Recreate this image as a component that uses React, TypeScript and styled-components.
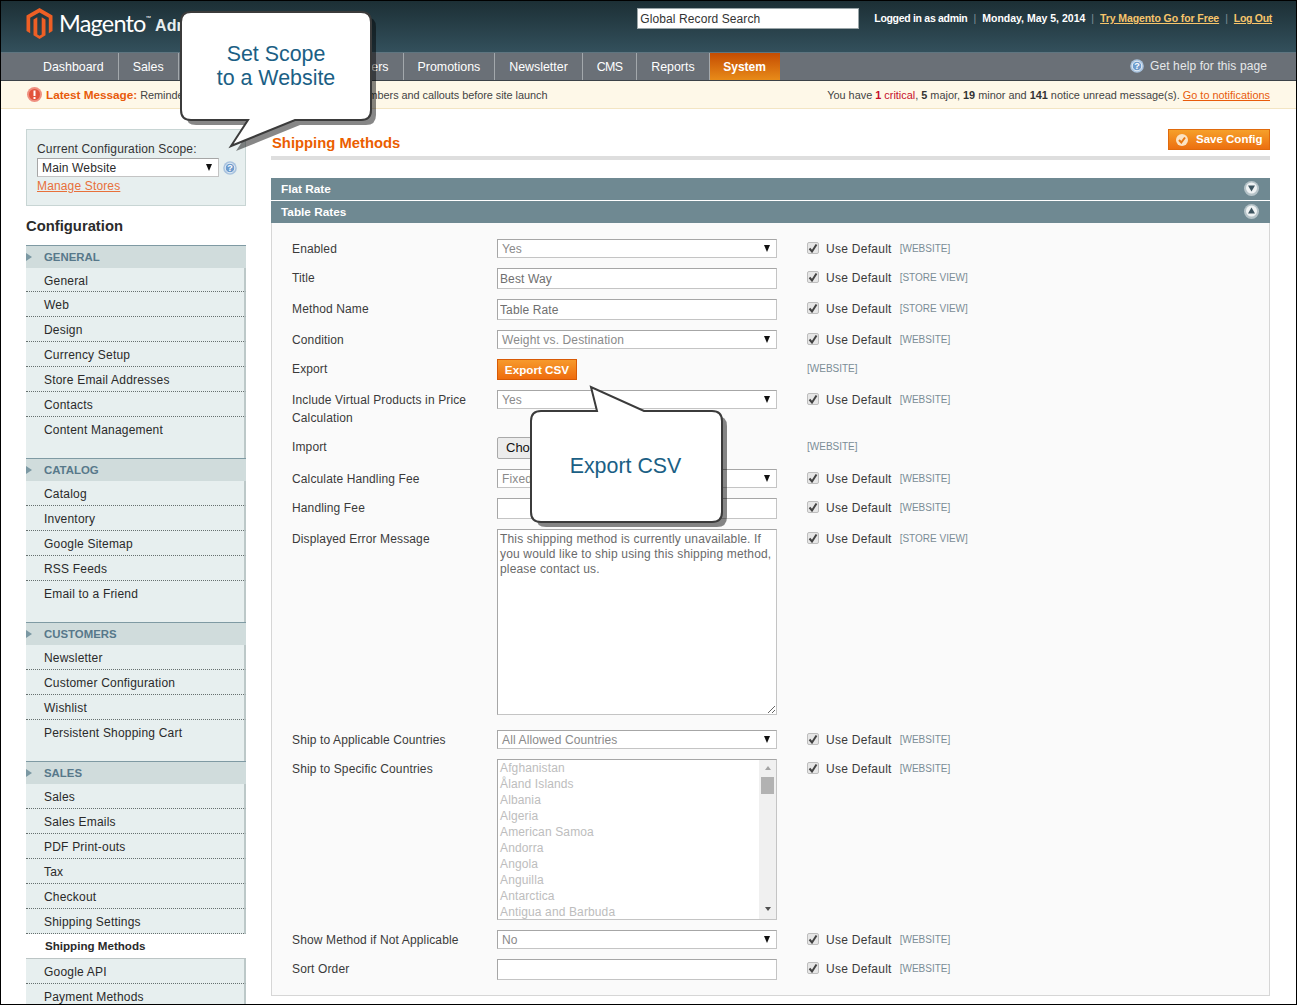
import React from "react";
import styled, { createGlobalStyle } from "styled-components";

const Global = createGlobalStyle`
  html, body { margin: 0; padding: 0; background: #fff; }
  * { box-sizing: border-box; }
  body { font-family: "Liberation Sans", Arial, sans-serif; font-size: 12px; color: #2f2f2f; }
`;

const Frame = styled.div`
  position: relative;
  width: 1297px;
  height: 1005px;
  border: 1px solid #000;
  overflow: hidden;
  background: #fff;
`;

const TopBar = styled.header`
  height: 52px;
  background: linear-gradient(#1c2f35, #33505c);
  border-bottom: 1px solid #5f7580;
  display: flex;
  justify-content: space-between;
  padding: 7px 24px 0 25px;
`;
const Brand = styled.div`
  display: flex;
  align-items: flex-start;
  gap: 6px;
  color: #fff;
`;
const BrandName = styled.span`
  font-family: Lato, "Liberation Sans", sans-serif;
  font-size: 23.5px;
  line-height: 31px;
  letter-spacing: -0.8px;
  white-space: nowrap;
`;
const Trademark = styled.sup`
  font-size: 7px;
  line-height: 0;
  vertical-align: 11px;
`;
const BrandSub = styled.span`
  font-size: 16px;
  font-weight: 700;
  line-height: 35px;
  margin-left: -1px;
  color: #e8eef0;
  white-space: nowrap;
`;
const TopRight = styled.div`
  display: flex;
  align-items: flex-start;
  gap: 15px;
`;
const Search = styled.input`
  width: 222px;
  height: 21px;
  border: 1px solid #9aa5a8;
  background: #fff;
  padding: 0 2px;
  font: 12px/19px "Liberation Sans", sans-serif;
  letter-spacing: 0.1px;
  color: #333;
  &::placeholder { color: #333; opacity: 1; }
`;
const UserLine = styled.div`
  display: flex;
  gap: 6px;
  color: #fff;
  font-size: 10.5px;
  line-height: 21px;
  font-weight: 700;
  white-space: nowrap;
`;
const UserText = styled.span<{ $track?: number }>`
  letter-spacing: ${(p) => p.$track ?? 0}px;
`;
const Pipe = styled.span`
  color: #7e9099;
  font-weight: 400;
`;
const TopLink = styled.a<{ $track?: number }>`
  color: #f7c56b;
  text-decoration: underline;
  letter-spacing: ${(p) => p.$track ?? 0}px;
`;

const Nav = styled.nav`
  height: 28px;
  background: #6a7077;
  border-bottom: 1px solid #3c4247;
  display: flex;
  padding-left: 28px;
  position: relative;
`;
const NavItem = styled.a<{ $track?: number }>`
  padding: 2px 14px 0;
  font-size: 12.4px;
  line-height: 25px;
  color: #fff;
  white-space: nowrap;
  letter-spacing: ${(p) => p.$track ?? 0}px;
  border-right: 1px solid #a3a8ac;
`;
const ActiveNavItem = styled.a`
  width: 70px;
  padding: 2px 0 0;
  text-align: center;
  font-size: 12px;
  font-weight: 700;
  line-height: 25px;
  color: #fff;
  background: linear-gradient(#c44c02, #e88b19);
`;
const Help = styled.a`
  margin-left: auto;
  margin-right: 29px;
  display: flex;
  align-items: center;
  gap: 6px;
  color: #e6e8ea;
  font-size: 12px;
  letter-spacing: 0.1px;
  height: 25px;
`;

const Notice = styled.div`
  height: 28px;
  background: #fef8e8;
  border-bottom: 1px solid #f3e5c3;
  display: flex;
  align-items: center;
  justify-content: space-between;
  padding: 0 26px 0 26px;
  font-size: 10.9px;
  color: #444;
`;
const NoticeLeft = styled.div`
  display: flex;
  align-items: center;
  gap: 4px;
  letter-spacing: -0.04px;
`;
const Latest = styled.b`
  color: #e85b0c;
  font-size: 11.8px;
`;
const Bold = styled.b<{ $red?: boolean }>`
  color: ${(p) => (p.$red ? "#c60d2b" : "#333")};
`;
const Crit = styled.span`
  color: #c60d2b;
`;
const NoticeLink = styled.a`
  color: #e85b0c;
  text-decoration: underline;
`;

const Body = styled.div`
  display: flex;
  gap: 25px;
  padding: 20px 26px 0 25px;
`;
const Side = styled.aside`
  width: 220px;
  flex: none;
`;
const ScopeBox = styled.div`
  height: 77px;
  background: #e7efef;
  border: 1px solid #c8d5d4;
  padding: 10px 0 0 10px;
  font-size: 12px;
  letter-spacing: 0.15px;
  line-height: 18px;
  color: #333;
`;
const ScopeRow = styled.div`
  display: flex;
  align-items: center;
  gap: 4px;
`;
const ScopeSelect = styled.div`
  flex: none;
  width: 182px;
  height: 19px;
  background: #fff;
  border: 1px solid #c4c4c4;
  border-top-color: #a6a6a6;
  border-left-color: #a6a6a6;
  padding: 1px 5px 0 4px;
  display: flex;
  justify-content: space-between;
  align-items: center;
  line-height: 17px;
  color: #2a2a2a;
`;
const ManageLink = styled.a`
  display: block;
  color: #e8703a;
  text-decoration: underline;
  line-height: 18px;
`;
const SideTitle = styled.h3`
  margin: 0;
  height: 39px;
  background: #fff;
  font-size: 14.8px;
  font-weight: 700;
  line-height: 40px;
  color: #2b2b2b;
`;
const Group = styled.section<{ $pad: number }>`
  background: #e7efef;
  border-right: 2px solid #bcc8c8;
  padding-bottom: ${(p) => p.$pad}px;
`;
const GroupHead = styled.div`
  height: 23px;
  margin-right: -2px;
  background: #d0dcdc;
  border-top: 1px solid #7f9aa3;
  padding-left: 18px;
  position: relative;
  color: #57788a;
  font-size: 11.4px;
  font-weight: 700;
  line-height: 22px;
  text-transform: uppercase;
  &::before {
    content: "";
    position: absolute;
    left: 0;
    top: 7px;
    border-left: 6px solid #7b98a3;
    border-top: 4px solid transparent;
    border-bottom: 4px solid transparent;
  }
`;
const Item = styled.a<{ $last?: boolean; $short?: boolean }>`
  display: block;
  height: ${(p) => (p.$short ? 24 : 25)}px;
  margin-right: -2px;
  padding-left: 18px;
  line-height: 26px;
  font-size: 12px;
  letter-spacing: 0.2px;
  color: #2a2a2a;
  border-right: 2px solid #bcc8c8;
  border-bottom: 1px ${(p) => (p.$last ? "none" : "dotted")} #66706f;
`;
const ActiveItem = styled.a`
  display: block;
  height: 25px;
  margin-right: -2px;
  padding-left: 19px;
  background: #fff;
  border-bottom: 1px solid #bcc5c5;
  font-size: 11.6px;
  font-weight: 700;
  line-height: 23px;
  color: #2a2a2a;
`;

const Main = styled.main`
  width: 999px;
  flex: none;
`;
const PageHead = styled.div`
  height: 31px;
  border-bottom: 4px solid #dedede;
  display: flex;
  align-items: flex-start;
  justify-content: space-between;
  margin-bottom: 18px;
`;
const PageTitle = styled.h3`
  margin: 4px 0 0 1px;
  font-size: 14.8px;
  font-weight: 700;
  line-height: 21px;
  color: #eb5e00;
`;
const SaveButton = styled.button`
  width: 102px;
  height: 21px;
  border: 1px solid #e06a0c;
  background: linear-gradient(#f6a02a, #ec6f10);
  color: #fff;
  font: 700 11.5px/19px "Liberation Sans", sans-serif;
  display: flex;
  align-items: center;
  gap: 8px;
  padding: 0 0 0 7px;
`;
const FoldBar = styled.div`
  height: 22px;
  margin-bottom: 1px;
  background: #6f8992;
  color: #fff;
  font-size: 11.8px;
  font-weight: 700;
  line-height: 22px;
  padding: 0 11px 0 10px;
  display: flex;
  justify-content: space-between;
  align-items: center;
`;
const FoldArt = styled.svg`
  margin-top: -1px;
`;
const Panel = styled.div`
  height: 773px;
  margin-top: -1px;
  background: #fafafa;
  border: 1px solid #d6d6d6;
  border-top: none;
  padding: 16px 20px 0;
  letter-spacing: 0.13px;
`;
const Row = styled.div<{ $after?: number }>`
  display: grid;
  grid-template-columns: 205px 280px auto;
  align-items: start;
  margin-bottom: ${(p) => p.$after ?? 10}px;
`;
const Label = styled.label`
  line-height: 18px;
  color: #3a3a3a;
  padding: 1px 20px 0 0;
`;
const Field = styled.div`
  width: 280px;
`;
const SelectBox = styled.div`
  height: 19px;
  background: #fff;
  border: 1px solid #c4c4c4;
  border-top-color: #a6a6a6;
  border-left-color: #a6a6a6;
  padding: 1px 5px 0 4px;
  display: flex;
  justify-content: space-between;
  align-items: center;
  line-height: 17px;
  color: #8a8a8a;
`;
const Arrow = styled.span`
  width: 0;
  height: 0;
  border-left: 3.5px solid transparent;
  border-right: 3.5px solid transparent;
  border-top: 7px solid #111;
  margin: -2px 1px 0 0;
`;
const TextInput = styled.input`
  display: block;
  width: 280px;
  height: 21px;
  background: #fff;
  border: 1px solid #c4c4c4;
  border-top-color: #a6a6a6;
  border-left-color: #a6a6a6;
  padding: 0 2px;
  font: 12px/19px "Liberation Sans", sans-serif;
  letter-spacing: 0.12px;
  color: #6f6f6f;
  outline: none;
`;
const TextArea = styled.textarea`
  display: block;
  width: 280px;
  height: 186px;
  background: #fff;
  border: 1px solid #c4c4c4;
  border-top-color: #a6a6a6;
  border-left-color: #a6a6a6;
  padding: 2px;
  margin: 0;
  font: 12px/15px "Liberation Sans", sans-serif;
  letter-spacing: 0.17px;
  color: #6a6a6a;
  outline: none;
`;
const ExportButton = styled.button`
  width: 80px;
  height: 21px;
  border: 1px solid #d85a05;
  background: linear-gradient(#f79a2c, #ee6c0e);
  color: #fff;
  font: 700 11.7px/19px "Liberation Sans", sans-serif;
  padding: 0 0 2px;
`;
const FileRow = styled.div`
  display: flex;
  align-items: center;
  gap: 6px;
  color: #555;
  white-space: nowrap;
`;
const FileButton = styled.button`
  width: 85px;
  height: 22px;
  border: 1px solid #a9a9a9;
  border-radius: 2px;
  background: #ececec;
  color: #111;
  font: 13px/20px "Liberation Sans", sans-serif;
  padding: 0 0 0 8px;
  text-align: left;
`;
const ListBox = styled.div`
  height: 161px;
  background: #fff;
  border: 1px solid #c4c4c4;
  border-top-color: #a6a6a6;
  border-left-color: #a6a6a6;
  display: flex;
  overflow: hidden;
`;
const Options = styled.div`
  flex: 1;
  padding-left: 2px;
  color: #bdbdbd;
  line-height: 16px;
`;
const ScrollTrack = styled.div`
  width: 17px;
  background: #f0f0f0;
  display: flex;
  flex-direction: column;
  align-items: center;
  padding-top: 6px;
  position: relative;
`;
const ScrollUp = styled.span`
  border-left: 3.5px solid transparent;
  border-right: 3.5px solid transparent;
  border-bottom: 4px solid #a3a3a3;
`;
const ScrollThumb = styled.span`
  width: 13px;
  height: 17px;
  background: #b2b2b2;
  margin-top: 7px;
`;
const ScrollDown = styled.span`
  position: absolute;
  bottom: 8px;
  border-left: 3.5px solid transparent;
  border-right: 3.5px solid transparent;
  border-top: 4px solid #505050;
`;
const DefaultCell = styled.div`
  display: flex;
  align-items: flex-end;
  height: 19px;
  margin-left: 30px;
  color: #3a3a3a;
  line-height: 18px;
  letter-spacing: 0.27px;
  white-space: nowrap;
`;
const Check = styled.span`
  align-self: flex-start;
  width: 12px;
  height: 12px;
  margin: 3px 7px 0 0;
  background: #e6e6e6;
  border: 1px solid #bdbdbd;
  border-radius: 2px;
  display: flex;
  align-items: center;
  justify-content: center;
`;
const ScopeTag = styled.span<{ $alone?: boolean }>`
  align-self: flex-start;
  margin: 1px 0 0 ${(p) => (p.$alone ? 0 : 8)}px;
  font-size: 10px;
  letter-spacing: 0;
  color: #7a8d96;
`;

const CalloutBox = styled.div<{ $left: number; $top: number; $w: number; $h: number }>`
  position: absolute;
  left: ${(p) => p.$left}px;
  top: ${(p) => p.$top}px;
  width: ${(p) => p.$w}px;
  height: ${(p) => p.$h}px;
  display: flex;
  align-items: center;
  justify-content: center;
  text-align: center;
  color: #1b5f85;
  font-size: 21.4px;
  line-height: 24px;
`;
const CalloutArt = styled.svg`
  position: absolute;
  inset: 0;
  width: 100%;
  height: 100%;
  overflow: visible;
`;
const CalloutText = styled.div<{ $nudge?: boolean }>`
  position: relative;
  ${(p) => (p.$nudge ? "left: -1px; top: -1px;" : "")}
`;

const CheckMark = () => (
  <svg width="10" height="10" viewBox="0 0 10 10">
    <path d="M1.5 5.5 L4 8.5 L8.5 1.5" fill="none" stroke="#444" strokeWidth="2" />
  </svg>
);

const QIcon = () => (
  <svg width="14" height="14" viewBox="0 0 14 14" style={{ flex: "none" }}>
    <circle cx="7" cy="7" r="6.8" fill="#a9c3de" />
    <circle cx="7" cy="7" r="4.8" fill="#6f9ccd" stroke="#eaf1f8" strokeWidth="1" />
    <text x="7" y="10" textAnchor="middle" fontSize="9" fontWeight="700" fill="#fff" fontFamily="Liberation Sans">?</text>
  </svg>
);

const Fold = ({ open }: { open?: boolean }) => (
  <FoldArt width="15" height="15" viewBox="0 0 15 15">
    <circle cx="7.5" cy="7.5" r="7.5" fill="#b5c3c8" />
    <circle cx="7.5" cy="7" r="5.5" fill="#eef2f3" />
    <path d={open ? "M7.5 3.5 L11 9.5 H4 Z" : "M4 4.5 H11 L7.5 10.5 Z"} fill="#3d5560" />
  </FoldArt>
);

const Logo = () => (
  <svg width="27" height="31" viewBox="0 0 26 31">
    <path fill="#ee5f25" d="M13 0 L26 7.5 V23 L22.3 25.2 V9.7 L13 4.4 L3.7 9.7 V25.2 L0 23 V7.5 Z" />
    <path fill="#ee5f25" d="M7 11.5 L10.8 9.3 V26.5 L13 27.8 L15.2 26.5 V9.3 L19 11.5 V27.3 L13 31 L7 27.3 Z" />
  </svg>
);

const UseDefault = ({ scope }: { scope: string }) => (
  <DefaultCell>
    <Check>
      <CheckMark />
    </Check>
    Use Default
    <ScopeTag>[{scope}]</ScopeTag>
  </DefaultCell>
);

const groups: { title: string; items: string[]; shortFirst?: boolean }[] = [
  { title: "General", shortFirst: true, items: ["General", "Web", "Design", "Currency Setup", "Store Email Addresses", "Contacts", "Content Management"] },
  { title: "Catalog", items: ["Catalog", "Inventory", "Google Sitemap", "RSS Feeds", "Email to a Friend"] },
  { title: "Customers", items: ["Newsletter", "Customer Configuration", "Wishlist", "Persistent Shopping Cart"] },
];

const countries = ["Afghanistan", "Åland Islands", "Albania", "Algeria", "American Samoa", "Andorra", "Angola", "Anguilla", "Antarctica", "Antigua and Barbuda"];

export default function App() {
  return (
    <Frame>
      <Global />
      <TopBar>
        <Brand>
          <Logo />
          <BrandName>
            Magento<Trademark>™</Trademark>
          </BrandName>
          <BrandSub>Admin Panel</BrandSub>
        </Brand>
        <TopRight>
          <Search placeholder="Global Record Search" readOnly />
          <UserLine>
            <UserText $track={-0.3}>Logged in as admin</UserText>
            <Pipe>|</Pipe>
            <UserText>Monday, May 5, 2014</UserText>
            <Pipe>|</Pipe>
            <TopLink $track={-0.1}>Try Magento Go for Free</TopLink>
            <Pipe>|</Pipe>
            <TopLink $track={-0.3}>Log Out</TopLink>
          </UserLine>
        </TopRight>
      </TopBar>
      <Nav>
        <NavItem>Dashboard</NavItem>
        <NavItem>Sales</NavItem>
        <NavItem>Catalog</NavItem>
        <NavItem $track={-0.2}>Mobile</NavItem>
        <NavItem>Customers</NavItem>
        <NavItem>Promotions</NavItem>
        <NavItem>Newsletter</NavItem>
        <NavItem $track={-0.7}>CMS</NavItem>
        <NavItem>Reports</NavItem>
        <ActiveNavItem>System</ActiveNavItem>
        <Help>
          <QIcon />
          Get help for this page
        </Help>
      </Nav>
      <Notice>
        <NoticeLeft>
          <svg width="15" height="15" viewBox="0 0 15 15">
            <circle cx="7.5" cy="7.5" r="7.5" fill="#ef8f7f" />
            <circle cx="7.5" cy="7.5" r="5.5" fill="#e2533c" />
            <rect x="6.5" y="3.5" width="2" height="5.5" fill="#fff" />
            <rect x="6.5" y="10" width="2" height="2" fill="#fff" />
          </svg>
          <span>
            <Latest>Latest Message:</Latest> Reminder: Change Magento`s default phone numbers and callouts before site launch
          </span>
        </NoticeLeft>
        <span>
          You have <Bold $red>1</Bold> <Crit>critical</Crit>, <Bold>5</Bold> major, <Bold>19</Bold> minor and <Bold>141</Bold> notice unread message(s). <NoticeLink>Go to notifications</NoticeLink>
        </span>
      </Notice>
      <Body>
        <Side>
          <ScopeBox>
            Current Configuration Scope:
            <ScopeRow>
              <ScopeSelect>
                Main Website
                <Arrow />
              </ScopeSelect>
              <QIcon />
            </ScopeRow>
            <ManageLink>Manage Stores</ManageLink>
          </ScopeBox>
          <SideTitle>Configuration</SideTitle>
          {groups.map((g) => (
            <Group key={g.title} $pad={16}>
              <GroupHead>{g.title}</GroupHead>
              {g.items.map((it, i) => (
                <Item key={it} $short={g.shortFirst && i === 0} $last={i === g.items.length - 1}>
                  {it}
                </Item>
              ))}
            </Group>
          ))}
          <Group $pad={0}>
            <GroupHead>Sales</GroupHead>
            {["Sales", "Sales Emails", "PDF Print-outs", "Tax", "Checkout", "Shipping Settings"].map((it) => (
              <Item key={it}>{it}</Item>
            ))}
            <ActiveItem>Shipping Methods</ActiveItem>
            <Item>Google API</Item>
            <Item>Payment Methods</Item>
          </Group>
        </Side>
        <Main>
          <PageHead>
            <PageTitle>Shipping Methods</PageTitle>
            <SaveButton>
              <svg width="12" height="12" viewBox="0 0 12 12">
                <circle cx="6" cy="6" r="6" fill="#fbe3c4" />
                <path d="M3 6 L5.3 8.5 L9 3.5" fill="none" stroke="#e8770f" strokeWidth="2" />
              </svg>
              Save Config
            </SaveButton>
          </PageHead>
          <FoldBar>
            Flat Rate
            <Fold />
          </FoldBar>
          <FoldBar>
            Table Rates
            <Fold open />
          </FoldBar>
          <Panel>
            <Row>
              <Label>Enabled</Label>
              <Field><SelectBox>Yes<Arrow /></SelectBox></Field>
              <UseDefault scope="WEBSITE" />
            </Row>
            <Row>
              <Label>Title</Label>
              <Field><TextInput readOnly value="Best Way" /></Field>
              <UseDefault scope="STORE VIEW" />
            </Row>
            <Row>
              <Label>Method Name</Label>
              <Field><TextInput readOnly value="Table Rate" /></Field>
              <UseDefault scope="STORE VIEW" />
            </Row>
            <Row>
              <Label>Condition</Label>
              <Field><SelectBox>Weight vs. Destination<Arrow /></SelectBox></Field>
              <UseDefault scope="WEBSITE" />
            </Row>
            <Row>
              <Label>Export</Label>
              <Field><ExportButton>Export CSV</ExportButton></Field>
              <DefaultCell><ScopeTag $alone>[WEBSITE]</ScopeTag></DefaultCell>
            </Row>
            <Row>
              <Label>Include Virtual Products in Price Calculation</Label>
              <Field><SelectBox>Yes<Arrow /></SelectBox></Field>
              <UseDefault scope="WEBSITE" />
            </Row>
            <Row>
              <Label>Import</Label>
              <Field>
                <FileRow>
                  <FileButton>Choose File</FileButton>
                  No file chosen
                </FileRow>
              </Field>
              <DefaultCell><ScopeTag $alone>[WEBSITE]</ScopeTag></DefaultCell>
            </Row>
            <Row>
              <Label>Calculate Handling Fee</Label>
              <Field><SelectBox>Fixed<Arrow /></SelectBox></Field>
              <UseDefault scope="WEBSITE" />
            </Row>
            <Row>
              <Label>Handling Fee</Label>
              <Field><TextInput readOnly value="" /></Field>
              <UseDefault scope="WEBSITE" />
            </Row>
            <Row $after={15}>
              <Label>Displayed Error Message</Label>
              <Field>
                <TextArea readOnly value="This shipping method is currently unavailable. If you would like to ship using this shipping method, please contact us." />
              </Field>
              <UseDefault scope="STORE VIEW" />
            </Row>
            <Row>
              <Label>Ship to Applicable Countries</Label>
              <Field><SelectBox>All Allowed Countries<Arrow /></SelectBox></Field>
              <UseDefault scope="WEBSITE" />
            </Row>
            <Row>
              <Label>Ship to Specific Countries</Label>
              <Field>
                <ListBox>
                  <Options>
                    {countries.map((c) => (
                      <div key={c}>{c}</div>
                    ))}
                  </Options>
                  <ScrollTrack>
                    <ScrollUp />
                    <ScrollThumb />
                    <ScrollDown />
                  </ScrollTrack>
                </ListBox>
              </Field>
              <UseDefault scope="WEBSITE" />
            </Row>
            <Row>
              <Label>Show Method if Not Applicable</Label>
              <Field><SelectBox>No<Arrow /></SelectBox></Field>
              <UseDefault scope="WEBSITE" />
            </Row>
            <Row>
              <Label>Sort Order</Label>
              <Field><TextInput readOnly value="" /></Field>
              <UseDefault scope="WEBSITE" />
            </Row>
          </Panel>
        </Main>
      </Body>

      <CalloutBox $left={180} $top={11} $w={190} $h={108}>
        <CalloutArt viewBox="0 0 190 108">
          <path transform="translate(5 5)" fill="#000" opacity="0.47" d="M10 0 H180 Q190 0 190 10 V98 Q190 108 180 108 H114 L50 134 L67 108 H10 Q0 108 0 98 V10 Q0 0 10 0 Z" />
          <path fill="#fff" stroke="#3b3b3b" strokeWidth="2" d="M10 0 H180 Q190 0 190 10 V98 Q190 108 180 108 H114 L50 134 L67 108 H10 Q0 108 0 98 V10 Q0 0 10 0 Z" />
        </CalloutArt>
        <CalloutText>
          Set Scope
          <br />
          to a Website
        </CalloutText>
      </CalloutBox>
      <CalloutBox $left={530} $top={410} $w={191} $h={111}>
        <CalloutArt viewBox="0 0 191 111">
          <path transform="translate(5 5)" fill="#000" opacity="0.47" d="M10 0 H181 Q191 0 191 10 V101 Q191 111 181 111 H10 Q0 111 0 101 V10 Q0 0 10 0 Z" />
          <path fill="#fff" stroke="#3b3b3b" strokeWidth="2" d="M10 0 H66 L60 -24 L113 0 H181 Q191 0 191 10 V101 Q191 111 181 111 H10 Q0 111 0 101 V10 Q0 0 10 0 Z" />
        </CalloutArt>
        <CalloutText $nudge>Export CSV</CalloutText>
      </CalloutBox>
    </Frame>
  );
}
